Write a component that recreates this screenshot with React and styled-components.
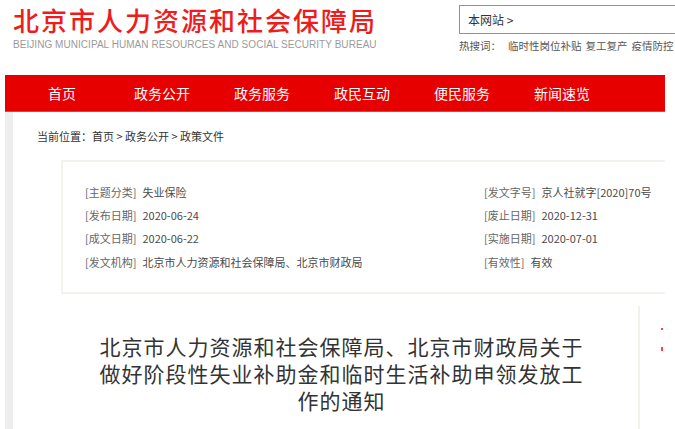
import React from "react";
import styled, { createGlobalStyle } from "styled-components";

const GlobalStyle = createGlobalStyle`
  html, body { margin: 0; padding: 0; background: #fff; overflow: hidden; }
  body { font-family: "Noto Sans CJK SC", "Liberation Sans", sans-serif; color: #333; }
  * { box-sizing: border-box; }
`;

const Page = styled.div`
  width: 720px;
`;

const Header = styled.header`
  display: flex;
  height: 75px;
  padding-left: 13px;
`;

const Logo = styled.div`
  flex: 0 0 446px;
  padding-top: 5px;
`;

const LogoTitle = styled.div`
  font-size: 26px;
  line-height: 30px;
  letter-spacing: 2px;
  font-weight: 500;
  color: #ee1c1c;
  white-space: nowrap;
`;

const LogoSub = styled.div`
  margin-top: 4px;
  font-family: "Liberation Sans", Arial, sans-serif;
  font-size: 10px;
  line-height: 12px;
  letter-spacing: 0.05px;
  color: #9a9a9a;
  white-space: nowrap;
`;

const SearchCol = styled.div`
  padding-top: 5px;
`;

const SearchBox = styled.div`
  width: 240px;
  height: 29px;
  border: 1.5px solid #f06a6a;
  padding-left: 8px;
  display: flex;
  align-items: center;
  font-size: 12px;
  color: #333;
`;

const HotWords = styled.div`
  margin-top: 5px;
  display: flex;
  gap: 4px;
  font-size: 10.5px;
  line-height: 14px;
  color: #555;
  white-space: nowrap;
`;

const HotLabel = styled.span`
  margin-right: 3px;
`;

const Nav = styled.nav`
  margin-left: 5px;
  width: 660px;
  height: 37px;
  background: #e60000;
  border-bottom: 1px solid #f23a3a;
  display: flex;
  padding-left: 7px;
`;

const NavItem = styled.a`
  width: 100px;
  text-align: center;
  line-height: 36px;
  font-size: 14px;
  color: #fff;
  text-decoration: none;
`;

const Main = styled.div`
  margin-left: 5px;
  width: 660px;
  display: flex;
  min-height: 330px;
`;

const Strip = styled.div`
  flex: 0 0 8px;
  background: #eeeeee;
`;

const Content = styled.div`
  flex: 1;
`;

const Crumb = styled.div`
  height: 48px;
  line-height: 48px;
  padding-left: 24px;
  font-size: 11px;
  color: #333;
`;

const InfoBox = styled.div`
  margin-left: 48px;
  height: 134px;
  border: 2px solid #f4f2ed;
  border-right: none;
  padding: 18px 0 0 22px;
  display: grid;
  grid-template-columns: 399px 1fr;
  grid-auto-rows: 23.3px;
  align-items: center;
`;

const InfoItem = styled.div`
  font-size: 11px;
  color: #4a4a4a;
  white-space: nowrap;
`;

const Label = styled.span`
  color: #666;
  margin-right: 6px;
`;

const Article = styled.div`
  margin-top: 12px;
  display: flex;
  min-height: 200px;
`;

const ArticleBody = styled.div`
  margin-left: 48px;
  width: 579px;
  border-right: 2px solid #f3f1ec;
  padding: 27px 54px 0 38px;
`;

const Title = styled.h1`
  margin: 0;
  font-size: 21px;
  line-height: 27px;
  letter-spacing: 1px;
  font-weight: 400;
  color: #333;
  text-align: center;
`;

const Side = styled.div`
  padding-top: 22px;
  padding-left: 21px;
  display: flex;
  flex-direction: column;
`;

const RedTick = styled.span`
  display: block;
  width: 1.5px;
  height: ${(p) => p.$h}px;
  margin-top: ${(p) => p.$mt}px;
  background: #f44;
`;

const navItems = ["首页", "政务公开", "政务服务", "政民互动", "便民服务", "新闻速览"];

const info = [
  ["主题分类", "失业保险", "发文字号", "京人社就字[2020]70号"],
  ["发布日期", "2020-06-24", "废止日期", "2020-12-31"],
  ["成文日期", "2020-06-22", "实施日期", "2020-07-01"],
  ["发文机构", "北京市人力资源和社会保障局、北京市财政局", "有效性", "有效"],
];

export default function App() {
  return (
    <Page>
      <GlobalStyle />
      <Header>
        <Logo>
          <LogoTitle>北京市人力资源和社会保障局</LogoTitle>
          <LogoSub>BEIJING MUNICIPAL HUMAN RESOURCES AND SOCIAL SECURITY BUREAU</LogoSub>
        </Logo>
        <SearchCol>
          <SearchBox>本网站 &gt;</SearchBox>
          <HotWords>
            <HotLabel>热搜词：</HotLabel>
            <span>临时性岗位补贴</span>
            <span>复工复产</span>
            <span>疫情防控</span>
          </HotWords>
        </SearchCol>
      </Header>
      <Nav>
        {navItems.map((n) => (
          <NavItem key={n} href="#">{n}</NavItem>
        ))}
      </Nav>
      <Main>
        <Strip />
        <Content>
          <Crumb>当前位置：首页 &gt; 政务公开 &gt; 政策文件</Crumb>
          <InfoBox>
            {info.map(([l1, v1, l2, v2]) => (
              <React.Fragment key={l1}>
                <InfoItem>
                  <Label>[{l1}]</Label>
                  {v1}
                </InfoItem>
                <InfoItem>
                  <Label>[{l2}]</Label>
                  {v2}
                </InfoItem>
              </React.Fragment>
            ))}
          </InfoBox>
          <Article>
            <ArticleBody>
              <Title>北京市人力资源和社会保障局、北京市财政局关于做好阶段性失业补助金和临时生活补助申领发放工作的通知</Title>
            </ArticleBody>
            <Side>
              <RedTick $h={2} $mt={0} />
              <RedTick $h={4} $mt={17} />
            </Side>
          </Article>
        </Content>
      </Main>
    </Page>
  );
}
